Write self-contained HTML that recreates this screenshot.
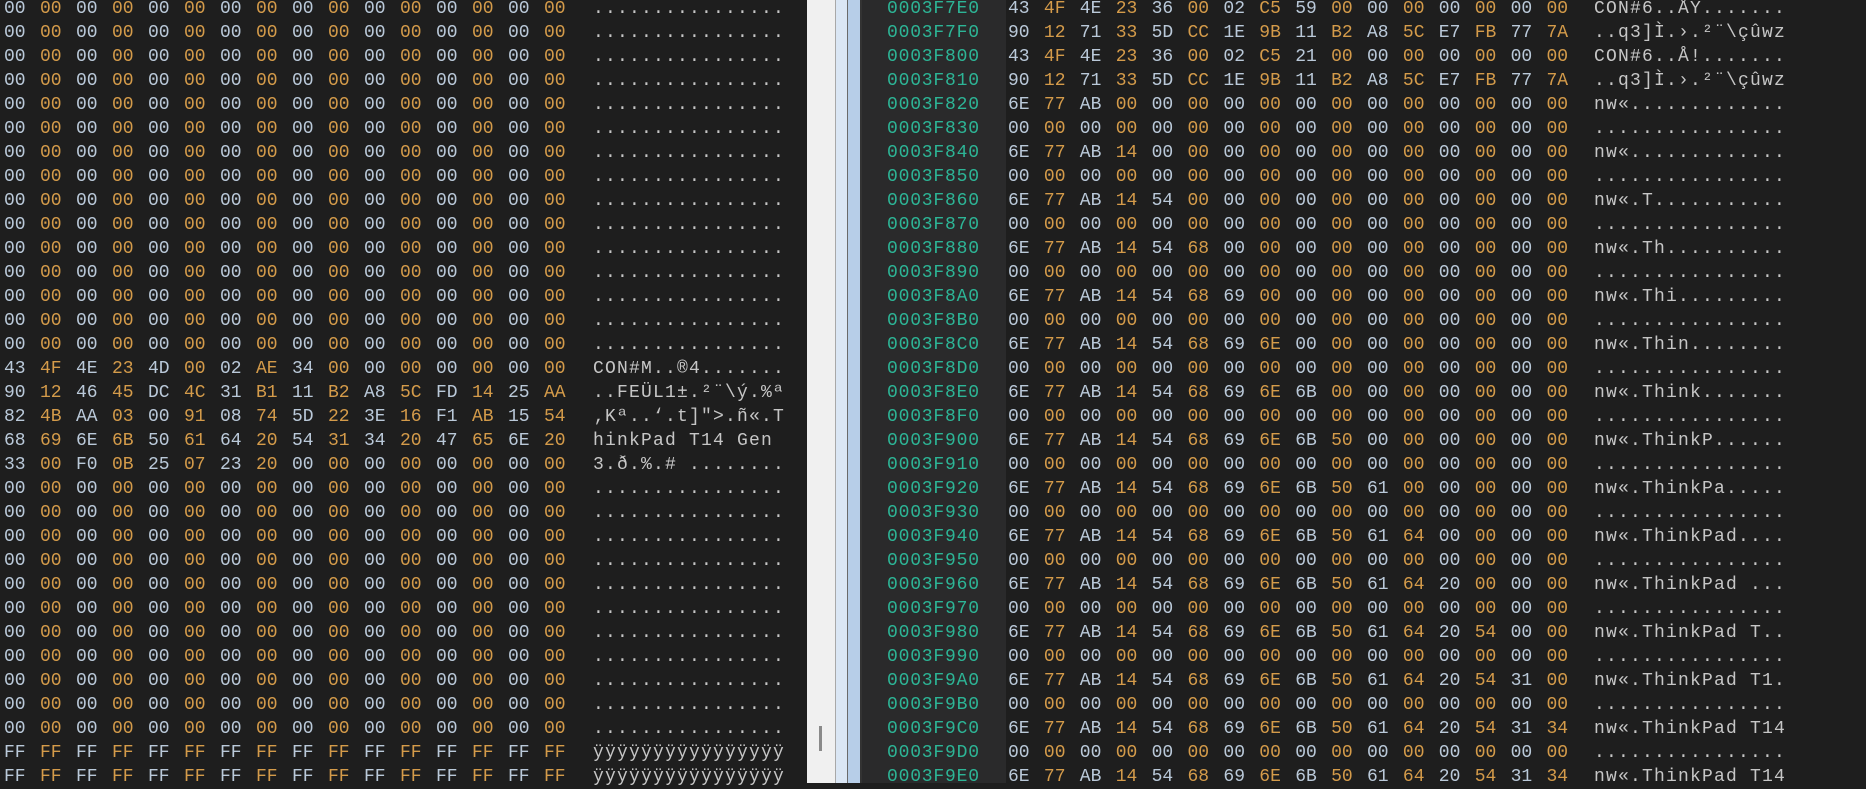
<!DOCTYPE html>
<html><head><meta charset="utf-8">
<style>
html,body{margin:0;padding:0;width:1866px;height:783px;overflow:hidden;background:#1e1e1e;}
.bg{position:absolute;top:0;height:783px;}
pre{position:absolute;margin:0;top:-3px;line-height:24px;font-family:"Liberation Mono",monospace;white-space:pre;font-size:18px;}
.asc{letter-spacing:1.2px;}
.off{letter-spacing:0.8px;}
.a{color:#bac9d9;}
.b{color:#d49b4a;}
.t{color:#c6c6c6;}
.o{color:#2db596;}
</style></head><body>
<div class="bg" style="left:0;width:807px;background:#1e1e1e"></div>
<div class="bg" style="left:807px;width:28px;background:#f0f0f0"></div>
<div class="bg" style="left:835px;width:1px;background:#a8a8a8"></div>
<div class="bg" style="left:836px;width:11px;background:#dae6f4"></div>
<div class="bg" style="left:847px;width:1px;background:#6a6a6a"></div>
<div class="bg" style="left:848px;width:12px;background:#b7cee8"></div>
<div class="bg" style="left:860px;width:2px;background:#333"></div>
<div class="bg" style="left:862px;width:144px;background:#2a2a2b"></div>
<div class="bg" style="left:1006px;width:860px;background:#1e1e1e"></div>
<div style="position:absolute;left:819px;top:726px;width:3px;height:25px;background:#8a8a8a"></div>

<!-- LEFT HEX -->
<pre class="a" style="left:4px">00
00
00
00
00
00
00
00
00
00
00
00
00
00
00
43
90
82
68
33
00
00
00
00
00
00
00
00
00
00
00
FF
FF</pre>
<pre class="b" style="left:40px">00
00
00
00
00
00
00
00
00
00
00
00
00
00
00
4F
12
4B
69
00
00
00
00
00
00
00
00
00
00
00
00
FF
FF</pre>
<pre class="a" style="left:76px">00
00
00
00
00
00
00
00
00
00
00
00
00
00
00
4E
46
AA
6E
F0
00
00
00
00
00
00
00
00
00
00
00
FF
FF</pre>
<pre class="b" style="left:112px">00
00
00
00
00
00
00
00
00
00
00
00
00
00
00
23
45
03
6B
0B
00
00
00
00
00
00
00
00
00
00
00
FF
FF</pre>
<pre class="a" style="left:148px">00
00
00
00
00
00
00
00
00
00
00
00
00
00
00
4D
DC
00
50
25
00
00
00
00
00
00
00
00
00
00
00
FF
FF</pre>
<pre class="b" style="left:184px">00
00
00
00
00
00
00
00
00
00
00
00
00
00
00
00
4C
91
61
07
00
00
00
00
00
00
00
00
00
00
00
FF
FF</pre>
<pre class="a" style="left:220px">00
00
00
00
00
00
00
00
00
00
00
00
00
00
00
02
31
08
64
23
00
00
00
00
00
00
00
00
00
00
00
FF
FF</pre>
<pre class="b" style="left:256px">00
00
00
00
00
00
00
00
00
00
00
00
00
00
00
AE
B1
74
20
20
00
00
00
00
00
00
00
00
00
00
00
FF
FF</pre>
<pre class="a" style="left:292px">00
00
00
00
00
00
00
00
00
00
00
00
00
00
00
34
11
5D
54
00
00
00
00
00
00
00
00
00
00
00
00
FF
FF</pre>
<pre class="b" style="left:328px">00
00
00
00
00
00
00
00
00
00
00
00
00
00
00
00
B2
22
31
00
00
00
00
00
00
00
00
00
00
00
00
FF
FF</pre>
<pre class="a" style="left:364px">00
00
00
00
00
00
00
00
00
00
00
00
00
00
00
00
A8
3E
34
00
00
00
00
00
00
00
00
00
00
00
00
FF
FF</pre>
<pre class="b" style="left:400px">00
00
00
00
00
00
00
00
00
00
00
00
00
00
00
00
5C
16
20
00
00
00
00
00
00
00
00
00
00
00
00
FF
FF</pre>
<pre class="a" style="left:436px">00
00
00
00
00
00
00
00
00
00
00
00
00
00
00
00
FD
F1
47
00
00
00
00
00
00
00
00
00
00
00
00
FF
FF</pre>
<pre class="b" style="left:472px">00
00
00
00
00
00
00
00
00
00
00
00
00
00
00
00
14
AB
65
00
00
00
00
00
00
00
00
00
00
00
00
FF
FF</pre>
<pre class="a" style="left:508px">00
00
00
00
00
00
00
00
00
00
00
00
00
00
00
00
25
15
6E
00
00
00
00
00
00
00
00
00
00
00
00
FF
FF</pre>
<pre class="b" style="left:544px">00
00
00
00
00
00
00
00
00
00
00
00
00
00
00
00
AA
54
20
00
00
00
00
00
00
00
00
00
00
00
00
FF
FF</pre>

<pre class="t asc" style="left:593px">................
................
................
................
................
................
................
................
................
................
................
................
................
................
................
CON#M..®4.......
..FEÜL1±.²¨\ý.%ª
‚Kª..‘.t]&quot;&gt;.ñ«.T
hinkPad T14 Gen 
3.ð.%.# ........
................
................
................
................
................
................
................
................
................
................
................
ÿÿÿÿÿÿÿÿÿÿÿÿÿÿÿÿ
ÿÿÿÿÿÿÿÿÿÿÿÿÿÿÿÿ</pre>

<!-- RIGHT OFFSETS -->
<pre class="o off" style="left:887px">0003F7E0
0003F7F0
0003F800
0003F810
0003F820
0003F830
0003F840
0003F850
0003F860
0003F870
0003F880
0003F890
0003F8A0
0003F8B0
0003F8C0
0003F8D0
0003F8E0
0003F8F0
0003F900
0003F910
0003F920
0003F930
0003F940
0003F950
0003F960
0003F970
0003F980
0003F990
0003F9A0
0003F9B0
0003F9C0
0003F9D0
0003F9E0</pre>

<!-- RIGHT HEX -->
<pre class="a" style="left:1008px">43
90
43
90
6E
00
6E
00
6E
00
6E
00
6E
00
6E
00
6E
00
6E
00
6E
00
6E
00
6E
00
6E
00
6E
00
6E
00
6E</pre>
<pre class="b" style="left:1043.9px">4F
12
4F
12
77
00
77
00
77
00
77
00
77
00
77
00
77
00
77
00
77
00
77
00
77
00
77
00
77
00
77
00
77</pre>
<pre class="a" style="left:1079.8px">4E
71
4E
71
AB
00
AB
00
AB
00
AB
00
AB
00
AB
00
AB
00
AB
00
AB
00
AB
00
AB
00
AB
00
AB
00
AB
00
AB</pre>
<pre class="b" style="left:1115.7px">23
33
23
33
00
00
14
00
14
00
14
00
14
00
14
00
14
00
14
00
14
00
14
00
14
00
14
00
14
00
14
00
14</pre>
<pre class="a" style="left:1151.6px">36
5D
36
5D
00
00
00
00
54
00
54
00
54
00
54
00
54
00
54
00
54
00
54
00
54
00
54
00
54
00
54
00
54</pre>
<pre class="b" style="left:1187.5px">00
CC
00
CC
00
00
00
00
00
00
68
00
68
00
68
00
68
00
68
00
68
00
68
00
68
00
68
00
68
00
68
00
68</pre>
<pre class="a" style="left:1223.4px">02
1E
02
1E
00
00
00
00
00
00
00
00
69
00
69
00
69
00
69
00
69
00
69
00
69
00
69
00
69
00
69
00
69</pre>
<pre class="b" style="left:1259.3px">C5
9B
C5
9B
00
00
00
00
00
00
00
00
00
00
6E
00
6E
00
6E
00
6E
00
6E
00
6E
00
6E
00
6E
00
6E
00
6E</pre>
<pre class="a" style="left:1295.2px">59
11
21
11
00
00
00
00
00
00
00
00
00
00
00
00
6B
00
6B
00
6B
00
6B
00
6B
00
6B
00
6B
00
6B
00
6B</pre>
<pre class="b" style="left:1331.1px">00
B2
00
B2
00
00
00
00
00
00
00
00
00
00
00
00
00
00
50
00
50
00
50
00
50
00
50
00
50
00
50
00
50</pre>
<pre class="a" style="left:1367px">00
A8
00
A8
00
00
00
00
00
00
00
00
00
00
00
00
00
00
00
00
61
00
61
00
61
00
61
00
61
00
61
00
61</pre>
<pre class="b" style="left:1402.9px">00
5C
00
5C
00
00
00
00
00
00
00
00
00
00
00
00
00
00
00
00
00
00
64
00
64
00
64
00
64
00
64
00
64</pre>
<pre class="a" style="left:1438.8px">00
E7
00
E7
00
00
00
00
00
00
00
00
00
00
00
00
00
00
00
00
00
00
00
00
20
00
20
00
20
00
20
00
20</pre>
<pre class="b" style="left:1474.7px">00
FB
00
FB
00
00
00
00
00
00
00
00
00
00
00
00
00
00
00
00
00
00
00
00
00
00
54
00
54
00
54
00
54</pre>
<pre class="a" style="left:1510.6px">00
77
00
77
00
00
00
00
00
00
00
00
00
00
00
00
00
00
00
00
00
00
00
00
00
00
00
00
31
00
31
00
31</pre>
<pre class="b" style="left:1546.5px">00
7A
00
7A
00
00
00
00
00
00
00
00
00
00
00
00
00
00
00
00
00
00
00
00
00
00
00
00
00
00
34
00
34</pre>

<pre class="t asc" style="left:1594px">CON#6..ÅY.......
..q3]Ì.›.²¨\çûwz
CON#6..Å!.......
..q3]Ì.›.²¨\çûwz
nw«.............
................
nw«.............
................
nw«.T...........
................
nw«.Th..........
................
nw«.Thi.........
................
nw«.Thin........
................
nw«.Think.......
................
nw«.ThinkP......
................
nw«.ThinkPa.....
................
nw«.ThinkPad....
................
nw«.ThinkPad ...
................
nw«.ThinkPad T..
................
nw«.ThinkPad T1.
................
nw«.ThinkPad T14
................
nw«.ThinkPad T14</pre>
</body></html>
